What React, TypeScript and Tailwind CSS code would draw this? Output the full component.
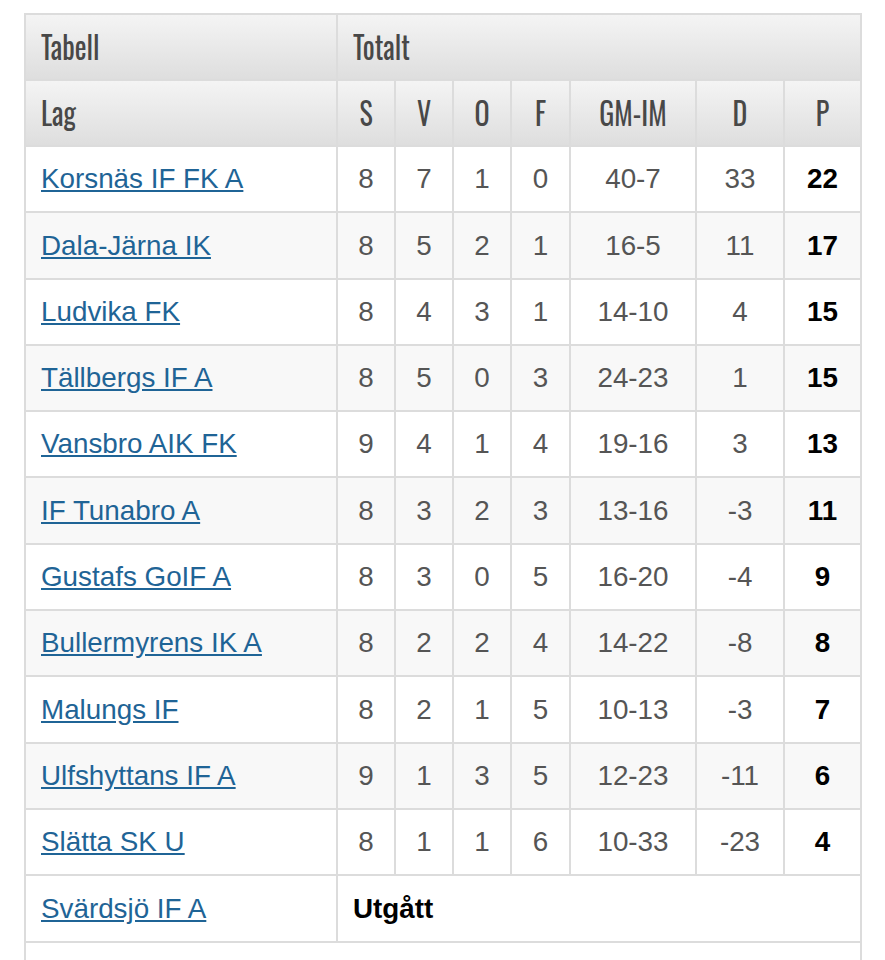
const rows = [
  ["Korsnäs IF FK A", "8", "7", "1", "0", "40-7", "33", "22"],
  ["Dala-Järna IK", "8", "5", "2", "1", "16-5", "11", "17"],
  ["Ludvika FK", "8", "4", "3", "1", "14-10", "4", "15"],
  ["Tällbergs IF A", "8", "5", "0", "3", "24-23", "1", "15"],
  ["Vansbro AIK FK", "9", "4", "1", "4", "19-16", "3", "13"],
  ["IF Tunabro A", "8", "3", "2", "3", "13-16", "-3", "11"],
  ["Gustafs GoIF A", "8", "3", "0", "5", "16-20", "-4", "9"],
  ["Bullermyrens IK A", "8", "2", "2", "4", "14-22", "-8", "8"],
  ["Malungs IF", "8", "2", "1", "5", "10-13", "-3", "7"],
  ["Ulfshyttans IF A", "9", "1", "3", "5", "12-23", "-11", "6"],
  ["Slätta SK U", "8", "1", "1", "6", "10-33", "-23", "4"],
];

const head =
  "border-2 border-[#dcdcdc] bg-gradient-to-b from-[#f4f4f4] to-[#dedede] text-[#484848] font-normal text-[28px] h-[66px] [font-family:Oswald,'Roboto_Condensed','DejaVu_Sans_Condensed','Liberation_Sans_Narrow',sans-serif] [font-stretch:condensed]";
const cell = "border-2 border-[#dcdcdc] h-[66.3px] text-center";

const H = ({ children }: { children: string }) => (
  <span className="inline-block scale-y-[1.12]">{children}</span>
);

const App = () => {
  return (
    <div className="bg-white pt-[13px] pl-[24px] font-['Liberation_Sans',Arial,sans-serif] text-[27.8px] text-[#555]">
      <table className="border-collapse w-[836px] table-fixed">
        <colgroup>
          <col className="w-[312px]" />
          <col className="w-[58px]" />
          <col className="w-[58px]" />
          <col className="w-[58px]" />
          <col className="w-[59px]" />
          <col className="w-[126px]" />
          <col className="w-[88px]" />
          <col className="w-[77px]" />
        </colgroup>
        <thead>
          <tr>
            <th className={head + " text-left pl-[15px]"}>
              <H>Tabell</H>
            </th>
            <th colSpan={7} className={head + " text-left pl-[15px]"}>
              <H>Totalt</H>
            </th>
          </tr>
          <tr>
            <th className={head + " text-left pl-[15px]"}>
              <H>Lag</H>
            </th>
            {["S", "V", "O", "F", "GM-IM", "D", "P"].map((h) => (
              <th key={h} className={head + " text-center"}>
                <H>{h}</H>
              </th>
            ))}
          </tr>
        </thead>
        <tbody>
          {rows.map((r, i) => (
            <tr key={r[0]} className={i % 2 === 1 ? "bg-[#f8f8f8]" : "bg-white"}>
              <td className="border-2 border-[#dcdcdc] h-[66.3px] pl-[15px]">
                <a href="#" className="text-[#1f6496] underline underline-offset-2">
                  {r[0]}
                </a>
              </td>
              {r.slice(1, 7).map((v, j) => (
                <td key={j} className={cell}>
                  {v}
                </td>
              ))}
              <td className={cell + " font-bold text-black"}>{r[7]}</td>
            </tr>
          ))}
          <tr className="bg-white">
            <td className="border-2 border-[#dcdcdc] h-[66.3px] pl-[15px]">
              <a href="#" className="text-[#1f6496] underline underline-offset-2">
                Svärdsjö IF A
              </a>
            </td>
            <td colSpan={7} className="border-2 border-[#dcdcdc] h-[66.3px] pl-[15px] font-bold text-black">
              Utgått
            </td>
          </tr>
          <tr className="bg-white">
            <td colSpan={8} className="border-2 border-[#dcdcdc] h-[66px]"></td>
          </tr>
        </tbody>
      </table>
    </div>
  );
};

export default App;
